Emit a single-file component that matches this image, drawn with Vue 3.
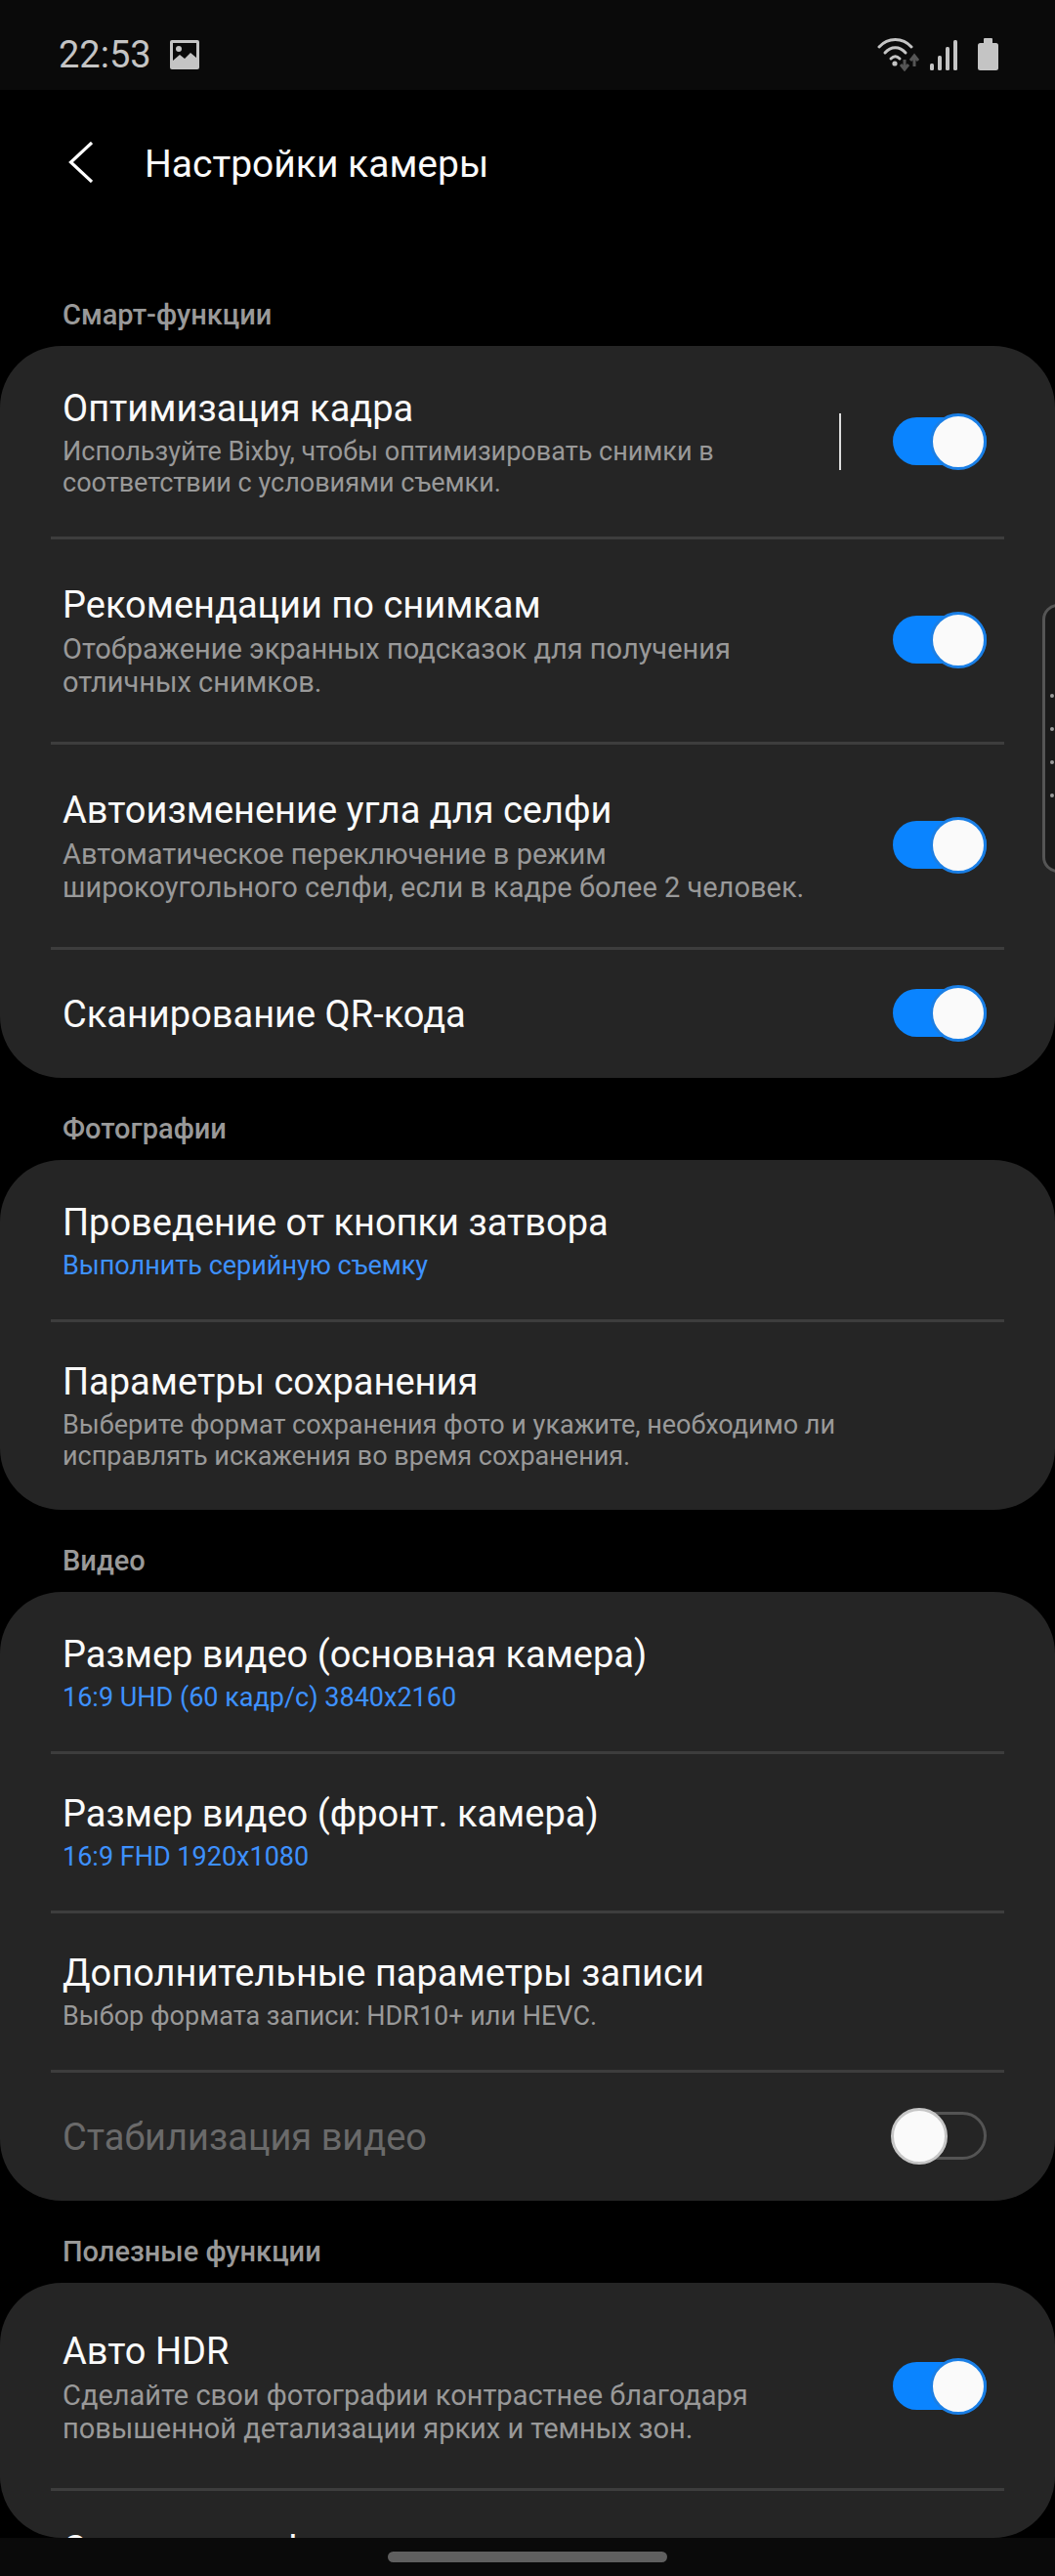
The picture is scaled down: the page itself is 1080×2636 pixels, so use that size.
<script setup>
const sections = [
  {
    label: 'Смарт-функции',
    rows: [
      { title: 'Оптимизация кадра', sub: ['Используйте Bixby, чтобы оптимизировать снимки в', 'соответствии с условиями съемки.'], toggle: true, cursor: true, cls: 'first' },
      { title: 'Рекомендации по снимкам', sub: ['Отображение экранных подсказок для получения', 'отличных снимков.'], toggle: true, cls: 'tall' },
      { title: 'Автоизменение угла для селфи', sub: ['Автоматическое переключение в режим', 'широкоугольного селфи, если в кадре более 2 человек.'], toggle: true, cls: 'tall' },
      { title: 'Сканирование QR-кода', toggle: true, cls: 'single' }
    ]
  },
  {
    label: 'Фотографии',
    rows: [
      { title: 'Проведение от кнопки затвора', value: 'Выполнить серийную съемку' },
      { title: 'Параметры сохранения', sub: ['Выберите формат сохранения фото и укажите, необходимо ли', 'исправлять искажения во время сохранения.'], cls: 'first' }
    ]
  },
  {
    label: 'Видео',
    rows: [
      { title: 'Размер видео (основная камера)', value: '16:9 UHD (60 кадр/с) 3840x2160' },
      { title: 'Размер видео (фронт. камера)', value: '16:9 FHD 1920x1080' },
      { title: 'Дополнительные параметры записи', sub: ['Выбор формата записи: HDR10+ или HEVC.'] },
      { title: 'Стабилизация видео', toggle: false, disabled: true, cls: 'single' }
    ]
  },
  {
    label: 'Полезные функции',
    rows: [
      { title: 'Авто HDR', sub: ['Сделайте свои фотографии контрастнее благодаря', 'повышенной детализации ярких и темных зон.'], toggle: true, cls: 'tall' },
      { title: 'Сохранение фото как на экране', cls: 'clipped' }
    ]
  }
]
</script>

<template>
  <div class="screen">
    <header class="status">
      <div class="status-left">
        <span class="time">22:53</span>
        <svg class="ic-image" width="30" height="30" viewBox="0 0 30 30">
          <rect x="0" y="0" width="30" height="30" rx="2" fill="#c4c4c4" />
          <rect x="3" y="3" width="24" height="24" fill="#0a0a0a" />
          <circle cx="9" cy="9" r="3" fill="#c4c4c4" />
          <path d="M3 21 L10 15 L15 19 L21 13 L27 18 V27 H3 Z" fill="#c4c4c4" />
        </svg>
      </div>
      <div class="status-right">
        <svg width="124" height="34" viewBox="0 0 124 34">
          <g fill="none" stroke="#c4c4c4" stroke-width="3" stroke-linecap="round">
            <path d="M2 9 C11 -1 26 -1 35 9" />
            <path d="M8 15 C14 8 23 8 29 15" />
            <path d="M14 21 C17 18 20 18 23 21" />
          </g>
          <circle cx="18" cy="26" r="2.6" fill="#c4c4c4" />
          <path d="M28 22 V31 M24 27 L28 32 L32 27" fill="none" stroke="#555" stroke-width="3" />
          <path d="M38 29 V19 M34 23 L38 18 L42 23" fill="none" stroke="#555" stroke-width="3" />
          <rect x="54" y="26" width="4" height="7" rx="1.5" fill="#c4c4c4" />
          <rect x="62" y="18" width="4" height="15" rx="1.5" fill="#c4c4c4" />
          <rect x="70" y="9" width="4" height="24" rx="1.5" fill="#c4c4c4" />
          <rect x="78" y="2" width="4" height="31" rx="1.5" fill="#c4c4c4" />
          <rect x="109" y="0" width="9" height="6" rx="1" fill="#c4c4c4" />
          <rect x="103" y="5" width="21" height="28" rx="2.5" fill="#c4c4c4" />
        </svg>
      </div>
    </header>

    <div class="appbar">
      <svg width="25" height="42" viewBox="0 0 25 42">
        <path d="M24 1 L2.5 21 L24 41" fill="none" stroke="#fff" stroke-width="3.2" />
      </svg>
      <h1>Настройки камеры</h1>
    </div>

    <main class="content">
      <section v-for="section in sections" :key="section.label">
        <div class="section-label">{{ section.label }}</div>
        <div class="card">
          <div
            v-for="row in section.rows"
            :key="row.title"
            class="row"
            :class="[row.cls, { disabled: row.disabled }]"
          >
            <div class="row-text">
              <div class="row-title">{{ row.title }}</div>
              <div v-if="row.value" class="row-value">{{ row.value }}</div>
              <div v-for="line in row.sub" :key="line" class="row-sub">{{ line }}</div>
            </div>
            <span v-if="row.cursor" class="row-sep"></span>
            <span v-if="row.toggle !== undefined" class="switch" :class="{ on: row.toggle }">
              <span class="knob"></span>
            </span>
          </div>
        </div>
      </section>
    </main>

    <footer class="navbar"><span class="pill"></span></footer>

    <div class="edge-handle">
      <i></i><i></i><i></i><i></i>
    </div>
  </div>
</template>

<style>
html, body {
  margin: 0;
  background: #000;
}
</style>

<style scoped>
.screen {
  position: relative;
  width: 1080px;
  height: 2636px;
  display: flex;
  flex-direction: column;
  overflow: hidden;
  background: #000;
  color: #fafafa;
  font-family: Roboto, "Liberation Sans", sans-serif;
}

.status {
  height: 92px;
  flex: none;
  background: #0a0a0a;
  display: flex;
  justify-content: space-between;
  align-items: flex-start;
  padding: 0 58px 0 60px;
  box-sizing: border-box;
}

.status-left {
  display: flex;
  align-items: center;
  gap: 19px;
  padding-top: 34px;
}

.time {
  font-size: 38px;
  line-height: 44px;
  color: #c4c4c4;
}

.status-right {
  padding-top: 39px;
  line-height: 0;
}

.appbar {
  height: 178px;
  flex: none;
  box-sizing: border-box;
  display: flex;
  align-items: flex-start;
  padding: 53px 0 0 70px;
  gap: 53px;
}

.appbar h1 {
  margin: 0;
  font-size: 39px;
  line-height: 46px;
  font-weight: 400;
  color: #fafafa;
}

.content {
  flex: 1;
  min-height: 0;
  overflow: hidden;
  border-radius: 0 0 63px 63px;
}

.section-label {
  height: 84px;
  box-sizing: border-box;
  padding: 35px 64px 0;
  font-size: 29px;
  line-height: 34px;
  font-weight: 500;
  color: #999;
}

.card {
  background: #252525;
  border-radius: 63px;
  overflow: hidden;
}

.row {
  position: relative;
  min-height: 163px;
  box-sizing: border-box;
  display: flex;
  align-items: center;
  padding: 0 70px 0 64px;
}

.row + .row::before {
  content: "";
  position: absolute;
  left: 52px;
  right: 52px;
  top: 0;
  height: 3px;
  background: #3d3d3d;
}

.row.first {
  min-height: 195px;
}

.row.tall {
  min-height: 210px;
}

.row.single {
  min-height: 134px;
}

.row.clipped {
  align-items: flex-start;
  padding-top: 38px;
}

.row-text {
  flex: 1;
  min-width: 0;
}

.row-title {
  font-size: 38px;
  line-height: 50px;
  margin-bottom: 3px;
}

.row.single .row-title {
  margin-bottom: 0;
  padding-top: 3px;
}

.row-sub {
  font-size: 27px;
  line-height: 32px;
  color: #999;
}

.row.tall .row-sub {
  font-size: 29px;
  line-height: 34px;
}

.row-value {
  font-size: 27px;
  line-height: 33px;
  color: #3e91ff;
}

.row.disabled .row-title {
  color: #6a6a6a;
}

.row-sep {
  width: 2px;
  height: 58px;
  background: #ddd;
  margin-right: 53px;
}

.switch {
  position: relative;
  width: 96px;
  height: 49px;
  flex: none;
  box-sizing: border-box;
  border-radius: 25px;
  border: 3px solid #545454;
}

.switch.on {
  background: #0a84ff;
  border: none;
}

.knob {
  position: absolute;
  left: -5px;
  top: -7px;
  width: 58px;
  height: 58px;
  box-sizing: border-box;
  border-radius: 50%;
  background: #fafafa;
  border: 3px solid #c6c6c6;
}

.switch.on .knob {
  left: 38px;
  top: -4px;
  border-color: #1a7fe6;
}

.navbar {
  height: 39px;
  flex: none;
  background: #0a0a0a;
  display: flex;
  justify-content: center;
  padding-top: 14px;
  box-sizing: border-box;
}

.pill {
  width: 286px;
  height: 11px;
  border-radius: 6px;
  background: #5f5f5f;
}

.edge-handle {
  position: absolute;
  top: 618px;
  right: -20px;
  width: 33px;
  height: 275px;
  box-sizing: border-box;
  border: 3px solid #555;
  border-radius: 16px;
  background: #1a1a1a;
  padding: 89px 0 0 5px;
  display: flex;
  flex-direction: column;
  gap: 30px;
}

.edge-handle i {
  width: 4px;
  height: 4px;
  border-radius: 50%;
  background: #999;
}
</style>
